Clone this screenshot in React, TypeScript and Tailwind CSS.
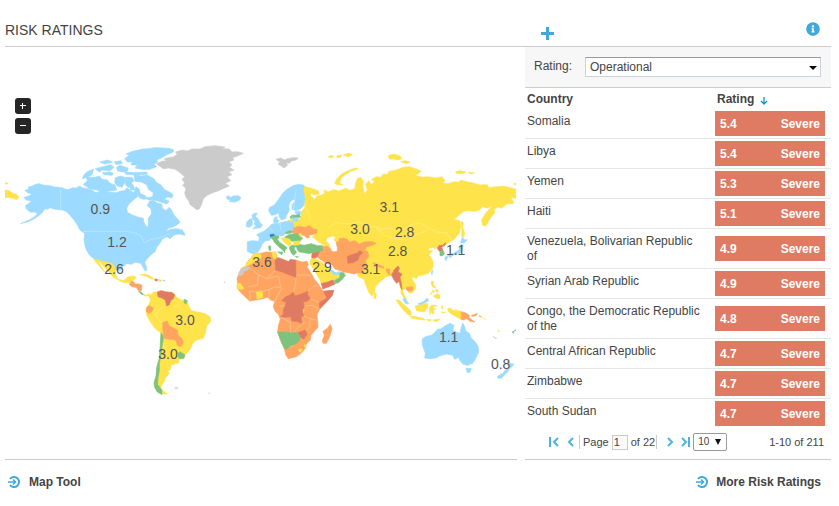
import React, { useState } from "react";
import { FaInfoCircle } from "react-icons/fa";

const BLUE = "#9cdbff";
const YELLOW = "#ffe34a";
const ORANGE = "#ffa561";
const RED = "#df7b62";
const GREEN = "#7dc37d";
const GREY = "#cbcbcb";

type Area = { fill: string; d: string };
type Region = { name: string; x: number; y: number; areas: Area[]; borders?: string };

// every region has its own origin on the map canvas
const regions: Region[] = [
  {
    name: "north-america",
    x: 0,
    y: 0,
    areas: [
      {
        fill: BLUE,
        d: `M75 151 86 148 84 142 98 137 110 132 118 131 128 135 150 137 165 142 182 142 195 147 205 149 217 143 228 144 240 138 246 143 262 146 275 150 288 158 300 154 325 156 350 158 362 153 375 152 380 143 392 152 402 158 408 140 418 148 420 160 410 172 400 180 388 190 380 205 382 217 395 224 410 230 430 235 432 248 438 258 444 262 446 245 444 236 455 220 452 205 442 198 448 184 460 181 472 189 485 192 488 205 497 212 508 202 514 210 522 225 532 236 540 247 530 255 517 262 505 265 497 275 512 268 530 266 540 268 552 282 538 282 522 285 510 296 500 290 486 298 480 310 470 322 466 334 456 342 440 358 434 368 440 382 440 392 434 391 427 378 422 370 405 367 395 373 380 371 368 380 360 392 345 388 335 373 315 368 300 362 283 357 270 347 262 335 256 322 252 300 254 280 248 272 240 270 232 255 222 240 212 228 200 215 188 210 165 208 150 203 143 208 135 206 128 216 118 226 100 238 84 245 62 251 86 241 103 231 112 222 106 216 92 217 80 208 76 198 86 190 96 183 78 180 72 173 86 168 96 162 82 158Z
M538 278 545 268 553 279 555 286 545 284Z M237 263 245 266 253 279 243 273Z
M374 56 388 46 378 42 398 34 425 28 468 23 505 25 520 29 520 36 500 44 488 52 470 60 474 67 462 72 470 80 450 88 425 88 405 84 412 76 392 74 398 66 382 66Z
M402 104 425 108 440 104 462 116 468 126 484 136 492 148 508 156 519 164 516 174 503 170 494 178 508 184 500 192 482 186 462 180 445 180 440 174 458 170 460 158 445 148 440 134 424 126 405 124Z
M250 133 262 122 258 112 285 112 298 108 306 118 322 120 330 130 345 135 350 150 330 153 308 156 290 150 268 146Z
M247 116 252 104 262 95 281 87 275 105 262 112Z
M286 86 310 80 332 74 342 82 330 92 308 90 298 96Z M350 82 360 76 384 84 384 92 368 96 352 92Z
M306 98 328 96 340 100 336 106 314 104Z
M372 95 400 98 440 96 442 102 410 105 378 103Z M346 113 362 108 374 112 375 126 366 142 352 138 344 128Z
M376 112 396 112 402 122 392 132 386 144 376 134Z M388 130 398 132 406 150 392 150Z
M342 66 362 62 368 70 350 74Z M418 160 434 166 444 176 430 178 416 172Z M300 66 322 60 338 66 315 72Z`,
      },
      { fill: YELLOW, d: "M15 150 28 152 38 160 50 163 56 170 50 179 38 174 15 172Z M15 129 23 129 23 132 15 132Z" },
    ],
    borders: "M182 142 182 208 M249 274 380 274 408 280 425 290 432 308 455 298 484 292 510 280",
  },
  {
    name: "greenland",
    x: 450,
    y: 0,
    areas: [
      {
        fill: GREY,
        d: `M20 72 35 64 50 62 42 56 72 50 82 42 76 36 98 30 112 33 126 27 150 27 165 20 195 17 225 21 215 26 238 27 246 36 262 35 280 40 262 48 248 53 252 60 236 66 246 74 238 82 252 90 236 96 246 104 232 110 242 122 226 130 238 138 218 146 206 152 188 158 172 166 160 176 156 190 148 207 140 209 130 201 120 194 116 182 108 172 104 158 108 146 98 136 104 128 96 118 104 110 90 98 76 88 56 84 40 86Z
M378 58 392 54 404 60 412 56 430 53 445 54 438 60 424 63 418 70 410 68 412 76 402 84 394 78 384 72 390 66Z`,
      },
      { fill: BLUE, d: "M229 170 236 167 242 173 250 168 264 167 273 173 268 181 254 186 238 185 242 179 232 178Z" },
    ],
  },
  {
    name: "eurasia",
    x: 0,
    y: 0,
    areas: [
      {
        fill: YELLOW,
        d: `M908 135 920 142 938 146 955 153 958 162 945 164 930 161 934 170 945 178 950 168 962 166 975 160 972 149 984 156 1000 149 1018 153 1036 145 1050 151 1065 146 1066 132 1072 116 1082 112 1090 122 1088 140 1094 162 1102 150 1097 133 1106 122 1114 134 1124 124 1114 118 1130 110 1142 112 1150 102 1160 104 1168 94 1190 90 1210 82 1226 80 1240 84 1264 93 1254 102 1244 106 1268 112 1282 110 1310 114 1326 110 1334 121 1330 130 1345 131 1362 125 1375 127 1382 121 1405 126 1420 129 1440 135 1462 134 1466 143 1480 141 1512 139 1547 147 1547 175 1532 172 1542 190 1520 192 1505 205 1494 201 1482 209 1484 218 1470 236 1458 258 1448 256 1445 240 1455 222 1470 205 1480 196 1462 204 1448 200 1438 210 1425 214 1404 212 1390 214 1378 225 1362 238 1380 243 1382 260 1378 280 1360 300 1342 310 1334 318 1324 316 1312 322 1304 328 1302 322 1288 324 1284 332 1298 332 1286 344 1296 358 1300 372 1297 388 1284 400 1265 406 1252 408 1250 416 1240 411 1235 416 1246 432 1247 446 1236 458 1229 460 1222 452 1214 444 1208 452 1212 466 1220 476 1212 474 1204 462 1202 445 1200 430 1178 405 1160 410 1150 416 1140 426 1126 440 1122 460 1115 468 1106 456 1098 436 1092 418 1084 414 1075 410 1064 380 1070 365 1094 340 1082 312 1040 303 1008 306 1002 299 1008 291 996 288 982 293 978 302 988 314 990 322 972 316 956 306 945 297 936 290 947 283 953 272 930 262 905 260 880 262 879 248 896 240 904 232 903 216 914 204 914 180Z
M1004 130 1010 118 1016 110 1030 99 1045 92 1060 86 1074 84 1072 88 1052 94 1036 104 1024 113 1018 130 1028 134 1012 134Z
M985 50 994 46 1002 50 990 54Z M1010 48 1026 45 1022 51 1012 53Z M1030 44 1048 40 1058 44 1044 50Z
M1164 48 1180 42 1200 48 1206 56 1192 60 1180 56 1170 58Z M1202 65 1214 62 1230 66 1220 71Z
M1366 96 1380 92 1398 96 1388 101 1370 100Z M1404 97 1424 99 1414 102Z M1543 130 1547 130 1547 134 1543 134Z
M1384 243 1390 248 1388 262 1394 278 1392 290 1385 290 1386 268Z
M1123 458 1129 462 1128 474 1122 476Z`,
      },
      { fill: RED, d: "M1312 324 1318 316 1328 316 1337 307 1334 316 1325 322 1329 332 1318 334Z" },
      { fill: GREEN, d: "M1320 334 1330 332 1333 342 1328 347 1320 347Z" },
      {
        fill: BLUE,
        d: "M1384 300 1388 292 1394 300 1402 299 1392 309 1382 308Z M1384 312 1390 316 1386 330 1380 340 1364 344 1354 348 1342 348 1360 340 1376 330Z M1336 350 1344 350 1338 362 1334 356Z M1348 349 1356 349 1350 354Z M1293 396 1299 390 1296 404Z",
      },
      {
        fill: RED,
        d: "M1174 404 1180 396 1182 390 1190 382 1194 378 1198 384 1194 396 1206 402 1200 412 1204 430 1206 448 1201 440 1198 424 1190 430 1182 420Z",
      },
      {
        fill: ORANGE,
        d: "M1120 368 1136 374 1150 380 1152 385 1138 381 1120 372Z M1158 386 1170 388 1168 394 1170 406 1162 400Z M1220 442 1238 440 1238 450 1226 454 1219 448Z",
      },
    ],
    borders:
      "M1080 270 1100 262 1125 260 1140 268 1170 264 1190 270 1210 268 1240 252 1262 250 1282 262 1310 276 1340 278 1355 305 M1130 262 1150 285 1185 296 1220 300 1245 285 1280 272 M914 190 930 236 M985 262 1010 248 1045 252 1075 246 1105 262",
  },
  {
    name: "europe",
    x: 690,
    y: 0,
    areas: [
      {
        fill: BLUE,
        d: `M50 246 58 238 66 236 67 254 58 262 49 260Z
M66 226 72 220 82 220 76 230 84 236 90 248 97 254 92 263 78 265 68 267 78 258 72 252 76 244 70 240Z
M116 212 118 203 134 194 146 178 158 160 172 147 192 136 208 133 222 136 220 150 224 176 222 196 212 206 196 212 186 208 186 194 196 182 190 178 180 186 176 198 178 210 172 222 166 236 154 240 148 230 146 218 136 224 124 226Z
M131 242 134 232 142 230 140 238 148 242 142 248 132 249Z
M52 305 66 302 86 304 88 292 80 284 92 278 104 272 116 262 126 252 146 250 160 246 178 242 190 242 192 262 186 275 168 278 160 288 146 287 134 288 124 286 120 300 104 304 96 314 90 326 84 336 68 341 60 338 52 334Z
M194 216 208 212 212 216 211 223 198 222Z M182 235 206 235 202 244 190 243Z
M307 394 318 398 322 404 336 396 334 404 322 406Z`,
      },
      { fill: "#2f7fc4", d: "M120 284 132 282 133 289 122 291Z" },
      { fill: YELLOW, d: "M176 241 186 239 188 244 177 244Z" },
      {
        fill: ORANGE,
        d: "M190 264 205 259 226 262 238 257 250 266 262 270 260 280 246 284 234 286 240 292 230 294 222 286 210 284 188 279Z",
      },
      {
        fill: GREEN,
        d: `M180 230 188 224 196 226 208 223 212 232 198 232 182 235Z M166 278 178 272 188 274 184 279 168 281Z
M122 293 134 287 146 288 147 294 142 298 150 308 162 316 172 324 166 328 164 338 158 330 146 320 134 308 128 298Z
M143 336 158 336 156 344Z M116 318 122 318 122 332 117 330Z
M164 291 176 284 186 282 204 281 212 290 218 294 210 304 190 305 178 300 168 302Z
M178 322 186 316 206 314 204 320 192 322 194 330 200 336 192 346 186 342 180 330Z
M200 322 208 313 222 316 244 311 262 317 278 317 281 326 278 335 262 338 246 338 238 341 224 338 208 336 202 330Z M196 349 206 351 198 352Z`,
      },
      {
        fill: YELLOW,
        d: "M154 294 166 294 180 298 184 312 178 320 172 314 160 304Z M190 304 211 303 208 314 192 316Z M206 282 214 280 216 292 210 288Z",
      },
      {
        fill: ORANGE,
        d: `M268 336 280 332 279 320 290 318 300 324 304 332 312 336 322 334 322 322 318 308 328 302 328 296 342 294 354 300 356 306 374 302 388 312 404 306 426 305 438 310 426 316 410 320 404 330 414 336 416 350 406 362 410 376 400 390 396 400 382 398 372 402 356 398 340 396 326 390 314 386 304 372 296 372 286 368 262 352Z`,
      },
      { fill: RED, d: "M352 350 366 344 380 340 390 332 398 338 388 348 384 360 368 368 354 370Z M246 340 268 336 262 350 250 358 245 352Z" },
    ],
    borders: "M90 304 98 308 M120 262 128 276 M150 250 152 270 M186 240 198 150 M84 336 64 330",
  },
  {
    name: "africa",
    x: 675,
    y: 240,
    areas: [
      {
        fill: ORANGE,
        d: `M62 140 66 126 78 116 84 104 92 100 108 100 124 96 142 97 152 96 156 112 170 116 190 124 212 120 232 126 246 124 250 134 246 140 258 160 268 178 280 192 290 208 296 214 312 212 325 212 322 224 310 240 296 254 284 268 276 284 278 302 279 322 268 334 258 346 256 360 244 372 240 386 228 400 214 410 190 416 183 406 178 386 166 360 158 336 160 318 166 298 160 282 150 274 145 258 150 244 136 240 128 232 112 236 94 240 74 243 60 230 46 216 36 204 38 190 36 176 42 160 50 144Z
M292 362 298 346 294 334 306 326 316 313 321 326 314 350 304 370 295 370Z`,
      },
      {
        fill: YELLOW,
        d: `M50 144 62 138 66 126 78 116 84 104 92 100 108 102 108 114 90 124 70 136Z M141 97 152 96 154 110 150 118 144 112Z
M36 193 46 190 56 204 54 208 38 207Z M94 216 112 213 113 232 96 237Z M222 386 232 388 228 396 221 394Z M238 374 244 376 242 382 237 381Z M230 266 237 268 235 280 231 276Z
M258 116 270 116 286 124 302 136 312 146 320 160 334 160 344 168 326 184 304 188 290 194 284 178 272 158 258 136 255 124Z`,
      },
      { fill: GREY, d: "M40 168 42 158 50 145 72 141 70 150 56 154 54 164Z" },
      {
        fill: RED,
        d: `M150 120 160 114 176 120 190 126 196 118 212 121 213 172 196 166 172 156 152 150Z
M170 242 182 230 194 226 204 217 210 228 228 222 248 214 248 224 256 236 246 244 234 246 238 258 232 272 236 288 228 290 230 310 216 304 202 304 196 290 180 292 164 290 174 284 176 268 184 246Z
M296 214 326 211 322 226 310 240 296 254 284 266 283 248 306 234Z M219 338 230 334 242 331 246 344 236 357 224 350Z
M289 190 302 188 324 180 330 192 312 200 293 207Z`,
      },
      { fill: GREEN, d: "M158 336 176 336 196 338 216 338 226 350 222 364 208 374 196 376 190 386 180 387 172 372Z M328 182 344 172 345 158 356 158 361 166 352 178 340 188 331 190Z" },
      { fill: BLUE, d: "M316 152 322 150 330 160 344 154 344 160 336 164 324 162Z" },
    ],
    borders:
      "M72 142 100 164 125 176 150 152 M100 164 98 196 70 200 M125 176 160 168 166 200 M213 172 212 190 206 216 M213 165 258 165 M132 210 150 200 170 204 M150 244 160 222 172 204 M165 258 180 258 M114 214 132 208 132 236 M76 240 74 214 94 216 M238 258 262 256 284 268 M236 288 256 296 276 300 M164 290 196 306 196 338 M204 338 220 322 240 306 M190 386 206 376 M256 296 254 320 244 332 M248 214 270 196 282 200 M256 236 282 248",
  },
  {
    name: "south-america",
    x: 240,
    y: 330,
    areas: [
      {
        fill: YELLOW,
        d: `M40 27 60 32 76 36 96 40 106 54 106 74 114 88 130 92 138 86 146 80 164 78 168 84 158 92 152 99 140 98 126 96 108 86 98 80 84 64 72 50 60 36 54 32 64 50 74 66 66 58 56 46Z
M180 74 196 72 210 78 224 88 212 86 198 78Z M233 88 246 91 240 95Z M188 132 200 136 208 131 214 138 204 138 194 138Z
M206 140 214 134 220 126 232 126 244 122 260 126 280 128 290 142 304 150 320 152 326 168 334 182 352 186 372 190 390 200 392 214 380 228 376 250 370 264 350 270 338 280 332 296 318 312 312 325 298 326 296 338 272 346 272 358 262 362 268 370 256 384 252 396 244 406 242 420 230 424 224 400 234 360 240 310 244 250 224 234 212 216 200 196 198 176 206 164 212 150Z`,
      },
      {
        fill: GREEN,
        d: "M243 248 250 258 250 272 246 290 244 312 238 340 238 362 234 384 232 402 242 416 248 420 246 434 232 426 224 412 222 398 228 378 230 352 238 324 240 296Z M312 148 322 152 318 162 313 159Z M176 124 184 126 190 134 184 133Z M294 310 300 305 314 314 312 324 300 326 294 320Z",
      },
      { fill: YELLOW, d: "M246 420 262 432 250 432Z" },
      {
        fill: ORANGE,
        d: "M148 104 154 94 162 96 164 102 178 102 186 106 184 122 176 122 168 112 156 110Z M200 172 208 167 220 174 216 184 206 190 199 184Z M248 218 262 213 266 226 280 234 292 240 294 256 306 266 310 278 302 290 292 286 290 276 282 268 270 268 254 266 249 246Z",
      },
      { fill: RED, d: "M232 126 244 122 258 126 274 127 284 134 280 146 272 152 268 164 260 168 256 150 246 144 234 140Z M225 87 232 88 232 93 225 92Z" },
      { fill: BLUE, d: "M249 91 254 91 254 93 249 93Z" },
      { fill: "#d8d8d8", d: "M284 413 294 412 292 416 285 416Z M386 428 390 430 388 432Z M432 95 436 97 434 99Z" },
    ],
    borders: "M256 168 240 176 228 196 216 188 M300 150 296 168 280 170 M252 266 250 300 M228 196 240 214 248 220",
  },
  {
    name: "oceania",
    x: 1050,
    y: 270,
    areas: [
      {
        fill: BLUE,
        d: `M216 328 226 320 244 316 256 306 262 298 274 296 284 288 292 284 300 280 312 286 308 300 318 306 330 310 334 292 338 278 344 290 348 304 358 310 364 324 374 334 384 348 386 366 376 388 368 400 352 406 338 402 330 392 326 382 314 388 308 376 290 372 268 378 258 384 236 386 224 384 226 370 218 348Z
M348 415 364 416 360 427 352 428Z M472 392 480 400 492 402 484 412 474 420 478 408Z M470 416 476 422 464 434 454 445 442 444 444 438 458 430Z
M160 204 168 208 176 222 166 220 160 212Z M204 222 222 214 232 204 236 212 224 218 214 226Z`,
      },
      {
        fill: YELLOW,
        d: `M138 209 150 212 166 228 182 242 184 256 174 254 160 240 146 222Z M180 259 198 260 222 266 226 270 204 268 184 264Z M232 268 244 270 240 273 230 270Z M248 270 270 268 258 275Z
M195 228 206 226 216 225 226 219 234 222 232 234 222 246 210 244 200 242Z M240 230 244 226 262 226 248 232 256 238 250 240 252 252 246 250 244 240 240 254 238 242Z
M292 236 302 234 308 242 318 240 334 245 334 269 322 262 308 254 296 246Z M244 154 250 154 250 164 258 174 250 172 244 164Z M248 180 254 184 248 188Z M258 178 264 180 264 188 258 184Z M250 198 262 192 270 196 268 206 258 204Z M240 194 246 186 244 192Z M274 232 278 226 278 238Z M274 246 286 247 280 249Z M393 260 398 264 394 262Z M402 264 406 268 402 266Z M444 300 448 304 444 304Z`,
      },
      { fill: ORANGE, d: "M334 245 346 248 358 256 356 262 366 270 374 276 360 274 350 266 340 270 334 268Z M364 256 378 252 382 250 378 257 366 259Z M388 256 394 260 388 259Z" },
      { fill: GREEN, d: "M486 306 492 304 490 310Z M494 300 498 300 494 303Z" },
      { fill: "#d8d8d8", d: "M428 318 440 325 436 326Z" },
    ],
  },
];

const labels = [
  { x: 301, y: 222, value: "0.9" },
  { x: 351, y: 321, value: "1.2" },
  { x: 342, y: 402, value: "2.6" },
  { x: 555, y: 555, value: "3.0" },
  { x: 504, y: 657, value: "3.0" },
  { x: 786, y: 381, value: "3.6" },
  { x: 966, y: 396, value: "2.9" },
  { x: 1080, y: 282, value: "3.0" },
  { x: 1168, y: 216, value: "3.1" },
  { x: 1214, y: 291, value: "2.8" },
  { x: 1193, y: 348, value: "2.8" },
  { x: 1112, y: 402, value: "3.1" },
  { x: 1367, y: 346, value: "1.1" },
  { x: 1346, y: 606, value: "1.1" },
  { x: 1502, y: 687, value: "0.8" },
];

const countries = [
  { name: "Somalia", rating: "5.4" },
  { name: "Libya", rating: "5.4" },
  { name: "Yemen", rating: "5.3" },
  { name: "Haiti", rating: "5.1" },
  { name: "Venezuela, Bolivarian Republic of", rating: "4.9" },
  { name: "Syrian Arab Republic", rating: "4.9" },
  { name: "Congo, the Democratic Republic of the", rating: "4.8" },
  { name: "Central African Republic", rating: "4.7" },
  { name: "Zimbabwe", rating: "4.7" },
  { name: "South Sudan", rating: "4.7" },
];

const WorldMap = () => (
  <svg viewBox="15 0 1536 780" className="mt-[6px] block w-full" role="img" aria-label="World risk map">
    {regions.map((region) => (
      <g key={region.name} transform={`translate(${region.x} ${region.y})`}>
        {region.areas.map((area, i) => (
          <path key={i} d={area.d} fill={area.fill} stroke={area.fill} strokeWidth="2" />
        ))}
        {region.borders && (
          <path d={region.borders} fill="none" stroke="#fff" strokeOpacity="0.4" strokeWidth="2" />
        )}
      </g>
    ))}
    {labels.map((label) => (
      <text key={`${label.x}-${label.y}`} x={label.x} y={label.y} textAnchor="middle" fontSize="42" fill="#555">
        {label.value}
      </text>
    ))}
  </svg>
);

const CircleArrow = () => (
  <svg viewBox="0 0 24 24" className="size-3 shrink-0" fill="none" stroke="#3fa9dc" aria-hidden="true">
    <path d="M4 6A10 10 0 1 1 4 18" strokeWidth="4" />
    <path d="M0 12h15M10 7l5 5-5 5" strokeWidth="3" />
  </svg>
);

const PagerButton = ({ label, d, className }: { label: string; d: string; className: string }) => (
  <button type="button" aria-label={label} className={className}>
    <svg viewBox="0 0 10 10" className="size-[10px]" fill="none" stroke="#4db2e0" strokeWidth="2" aria-hidden="true">
      <path d={d} />
    </svg>
  </button>
);

export default function App() {
  const [rating, setRating] = useState("Operational");
  const [page, setPage] = useState("1");
  const [pageSize, setPageSize] = useState("10");

  return (
    <main className="bg-white pr-2 pl-[5px] font-['Liberation_Sans',Arial,sans-serif] text-xs text-[#444]">
      <header className="grid h-[47px] grid-cols-[minmax(0,1fr)_306px] gap-2 border-b border-[#ccc]">
        <h1 className="pt-5 text-sm leading-5">RISK RATINGS</h1>
        <div className="flex items-start justify-between pr-[11px] pl-4">
          <button type="button" aria-label="Add" className="mt-[27px]">
            <svg viewBox="0 0 13 13" className="size-[13px]" fill="#3fa9dc" aria-hidden="true">
              <path d="M5 0h3v5h5v3H8v5H5V8H0V5h5z" />
            </svg>
          </button>
          <button type="button" aria-label="Information" className="mt-[22px]">
            <FaInfoCircle className="size-[14px] text-[#3fa9dc]" />
          </button>
        </div>
      </header>

      <div className="grid grid-cols-[minmax(0,1fr)_306px] gap-2">
        <section className="border-b border-[#ccc] pt-[51px]">
          <div className="flex flex-col gap-1 pl-[10px]">
            <button type="button" aria-label="Zoom in" className="flex size-4 items-center justify-center rounded-[3px] bg-[#262626]">
              <svg viewBox="0 0 6 6" className="size-[6px]" fill="#fff" aria-hidden="true">
                <path d="M2 0h1v2h3v1H3v3H2V3H0V2h2z" />
              </svg>
            </button>
            <button type="button" aria-label="Zoom out" className="flex size-4 items-center justify-center rounded-[3px] bg-[#262626]">
              <svg viewBox="0 0 6 6" className="size-[6px]" fill="#fff" aria-hidden="true">
                <path d="M0 2h6v1H0z" />
              </svg>
            </button>
          </div>
          <WorldMap />
        </section>

        <section className="border-b border-[#ccc]">
          <div className="flex h-[41px] items-start border-b border-[#ccc] bg-[#f7f7f7] pr-[10px] pl-[9px]">
            <label htmlFor="rating" className="w-[51px] pt-3 leading-[15px]">
              Rating:
            </label>
            <div className="relative mt-[10px] flex-1">
              <select
                id="rating"
                value={rating}
                onChange={(e) => setRating(e.target.value)}
                className="block h-5 w-full appearance-none border border-[#ccd3dd] border-t-[#999] bg-white px-1"
              >
                <option>Operational</option>
                <option>Political</option>
                <option>Security</option>
              </select>
              <svg viewBox="0 0 8 4" className="pointer-events-none absolute top-[9px] right-1 h-1 w-2" aria-hidden="true">
                <path d="M0 0h8L4 4z" fill="#000" />
              </svg>
            </div>
          </div>

          <table className="w-full table-fixed border-separate border-spacing-0">
            <thead>
              <tr className="h-[21px] text-left align-top">
                <th scope="col" className="w-[190px] pt-1 pl-[2px] leading-[15px]">
                  Country
                </th>
                <th scope="col" className="pt-1 pl-[2px] leading-[15px]">
                  <span className="flex items-center gap-[6px]">
                    Rating
                    <svg viewBox="0 0 8 8" className="mt-[2px] size-2" fill="none" stroke="#0f97cc" aria-hidden="true">
                      <path d="M4 0v7M1 4l3 3 3-3" strokeWidth="1.3" />
                    </svg>
                  </span>
                </th>
              </tr>
            </thead>
            <tbody className="[&>tr:last-child>td]:border-transparent">
              {countries.map((country) => (
                <tr key={country.name} className="h-[30px]">
                  <td className="border-b border-[#e6e6e6] pt-[5px] pr-[10px] pb-1 pl-[2px] align-top leading-[15px]">
                    {country.name}
                  </td>
                  <td className="border-b border-[#e6e6e6] pr-[6px] align-middle">
                    <div className="flex h-[25px] items-center justify-between bg-[#df7b62] px-[5px] font-bold text-white">
                      <span>{country.rating}</span>
                      <span>Severe</span>
                    </div>
                  </td>
                </tr>
              ))}
            </tbody>
          </table>

          <nav aria-label="Pagination" className="flex h-[30px] items-center pr-[7px] pb-1 pl-6 text-[11px]">
            <PagerButton label="First page" d="M1 0v10M9 1L5 5l4 4" className="mr-2" />
            <PagerButton label="Previous page" d="M6 1L2 5l4 4" className="mr-[2px]" />
            <label htmlFor="page" className="border-l border-[#ccc] pl-[3px]">
              Page
            </label>
            <input
              id="page"
              value={page}
              onChange={(e) => setPage(e.target.value)}
              className="mx-[3px] h-[15px] w-4 border border-[#ccc] bg-[#fafafa] pl-px"
            />
            <span className="border-r border-[#ccc] pr-px">of 22</span>
            <PagerButton label="Next page" d="M3 1l4 4-4 4" className="mr-[6px] ml-2" />
            <PagerButton label="Last page" d="M1 1l4 4-4 4M8 0v10" className="mr-[2px]" />
            <div className="relative">
              <select
                aria-label="Rows per page"
                value={pageSize}
                onChange={(e) => setPageSize(e.target.value)}
                className="block h-[18px] w-[34px] appearance-none rounded-[2px] border border-[#999] bg-white pl-1 text-[10px]"
              >
                <option>10</option>
                <option>25</option>
                <option>50</option>
              </select>
              <svg viewBox="0 0 6 6" className="pointer-events-none absolute top-[6px] right-[6px] size-[6px]" aria-hidden="true">
                <path d="M0 0h6L3 6z" fill="#111" />
              </svg>
            </div>
            <span className="ml-auto">1-10 of 211</span>
          </nav>
        </section>
      </div>

      <footer className="flex justify-between pt-[14px] pr-[10px] pl-[3px] font-bold leading-4">
        <a href="#map-tool" className="flex items-center gap-[9px]">
          <CircleArrow />
          Map Tool
        </a>
        <a href="#more-ratings" className="flex items-center gap-2">
          <CircleArrow />
          More Risk Ratings
        </a>
      </footer>
    </main>
  );
}
